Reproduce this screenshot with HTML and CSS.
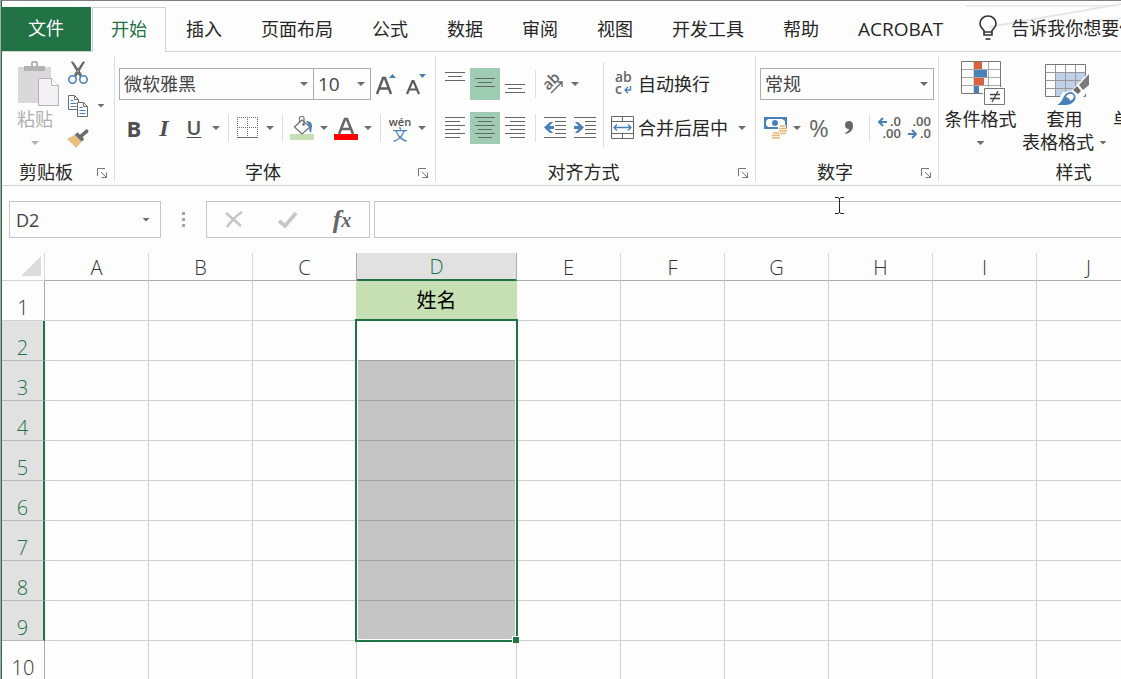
FILE: index.html
```html
<!DOCTYPE html>
<html lang="zh-CN">
<head>
  <meta charset="UTF-8">
  <meta name="viewport" content="width=device-width, initial-scale=1.0">
  <title>工作簿1 - Excel</title>
  <link rel="stylesheet" href="styles.css">
</head>
<body>
  <div class="window">
    <svg class="swoosh" width="160" height="32" viewBox="0 0 160 32">
      <path d="M5 5h150" stroke="#ececec" stroke-width="2"/>
      <path d="M28 26L160 3" stroke="#e6e6e6" stroke-width="2"/>
      <path d="M75 28L160 17" stroke="#eeeeee" stroke-width="2"/>
    </svg>

    <nav class="tabs">
      <button class="tab file">文件</button>
      <button class="tab active">开始</button>
      <button class="tab">插入</button>
      <button class="tab">页面布局</button>
      <button class="tab">公式</button>
      <button class="tab">数据</button>
      <button class="tab">审阅</button>
      <button class="tab">视图</button>
      <button class="tab">开发工具</button>
      <button class="tab">帮助</button>
      <button class="tab latin">ACROBAT</button>
      <button class="tell-me">
        <svg width="18" height="26" viewBox="0 0 18 26" fill="none" stroke="#333" stroke-width="1.600">
          <path d="M5 20V15.500C2.500 13 1 11.500 1 8.500A8 7.500 0 0 1 17 8.500C17 11.500 15.500 13 13 15.500V20zM5 17h8"/>
          <path d="M6.500 24h5"/>
        </svg>
        告诉我你想要做什么
      </button>
    </nav>

    <div class="ribbon">
      <!-- Clipboard -->
      <section class="group">
        <div class="group-body">
          <button class="big paste">
            <svg class="paste-icon" width="42" height="45" viewBox="0 0 42 45">
              <path d="M0 6h33v36H0z" fill="#dad8db"/>
              <path d="M6 10V5h7V2q0-2 2-2h3q2 0 2 2v3h7v5z" fill="#b3b3b3"/>
              <path d="M15 2h3v3h-3z" fill="#fff"/>
              <path d="M20.500 17.500h13l7 7v20h-20z" fill="#f3f1f4" stroke="#b3b3b3"/>
              <path d="M33.500 17.500v7h7" fill="#fff" stroke="#b3b3b3"/>
            </svg>
            <span>粘贴</span>
            <i class="caret light"></i>
          </button>
          <div class="clip-tools">
            <div class="row">
              <button class="tool" aria-label="剪切">
                <svg width="20" height="22" viewBox="0 0 20 22">
                  <path d="M3.500 0L12 14.500L13.500 12.500L5 0zM16.500 0L8 14.500L6.500 12.500L15 0z" fill="#6a6a6a" stroke="#6a6a6a"/>
                  <circle cx="4.500" cy="17.500" r="3.700" fill="#fff" stroke="#4a80b8" stroke-width="1.600"/>
                  <circle cx="15.500" cy="17.500" r="3.700" fill="#fff" stroke="#4a80b8" stroke-width="1.600"/>
                </svg>
              </button>
            </div>
            <div class="row">
              <button class="tool" aria-label="复制">
                <svg width="21" height="22" viewBox="0 0 21 22" fill="#fff" stroke="#6d6d6d">
                  <path d="M.5 .5h6l4 4v10H.5z"/><path d="M6.500 .5v4h4" fill="none"/>
                  <path d="M2.500 5.500h3M2.500 8.500h6M2.500 11.500h6" stroke="#4a80b8"/>
                  <path d="M9.500 7.500h6l4 4v10h-10z"/><path d="M15.500 7.500v4h4" fill="none"/>
                  <path d="M11.500 12.500h3M11.500 15.500h6M11.500 18.500h6" stroke="#4a80b8"/>
                </svg>
              </button>
              <button class="drop" aria-label="复制选项"><i class="caret"></i></button>
            </div>
            <div class="row">
              <button class="tool" aria-label="格式刷">
                <svg width="22" height="20" viewBox="0 0 24 22">
                  <path d="M0 11L9 6L16 14L10 21z" fill="#e8bf7c"/>
                  <path d="M10 5L17.500 12.500" stroke="#6d6d6d" stroke-width="4"/>
                  <path d="M15 8L21.500 2.500" stroke="#6d6d6d" stroke-width="4" stroke-linecap="round"/>
                </svg>
              </button>
            </div>
          </div>
        </div>
        <div class="group-foot">
          <span>剪贴板</span>
          <button class="launcher" aria-label="剪贴板设置">
            <svg width="11" height="11" viewBox="0 0 11 11" fill="none" stroke="#777"><path d="M.5 8V.5H8M4 4l5.500 5.500M9.500 4.500v5h-5"/></svg>
          </button>
        </div>
      </section>

      <!-- Font -->
      <section class="group">
        <div class="group-body pad stack">
          <div class="row">
            <label class="combo font-name"><select aria-label="字体"><option>微软雅黑</option></select></label>
            <label class="combo font-size"><select aria-label="字号"><option>10</option></select></label>
            <button class="tool" aria-label="增大字号">
              <svg width="22" height="22" viewBox="0 0 22 22">
                <path d="M2 21L8 5h2l6 16M4.500 15.500h9" fill="none" stroke="#5c5c5c" stroke-width="2.400"/>
                <path d="M14 5h7L17.500 1z" fill="#4a80b8"/>
              </svg>
            </button>
            <button class="tool" aria-label="减小字号">
              <svg width="22" height="22" viewBox="0 0 22 22">
                <path d="M2 21L7.500 8h1L14 21M4 16.500h8" fill="none" stroke="#5c5c5c" stroke-width="2.200"/>
                <path d="M14 1h7l-3.500 4z" fill="#4a80b8"/>
              </svg>
            </button>
          </div>
          <div class="row">
            <button class="tool bold">B</button>
            <button class="tool italic">I</button>
            <button class="tool underline">U</button>
            <button class="drop" aria-label="下划线选项"><i class="caret"></i></button>
            <span class="sep"></span>
            <button class="tool" aria-label="边框">
              <svg width="22" height="22" viewBox="0 0 22 22" stroke="#6d6d6d">
                <path d="M0 .5h22M0 10.500h22M.5 0v20M10.500 0v20M20.500 0v20" stroke-dasharray="1 1"/>
                <path d="M0 20.500h21"/>
              </svg>
            </button>
            <button class="drop" aria-label="边框选项"><i class="caret"></i></button>
            <span class="sep"></span>
            <button class="tool" aria-label="填充颜色">
              <svg width="24" height="24" viewBox="0 0 24 24">
                <path d="M0 18h24v6H0z" fill="#c6e0b4"/>
                <path d="M4.500 11L12 4l8 7-8 7z" fill="#fff" stroke="#6d6d6d" stroke-width="1.200"/>
                <path d="M9.500 7V2q0-1.500 1.500-1.500h1.500Q14 .5 14 2v6" fill="none" stroke="#6d6d6d" stroke-width="1.200"/>
                <circle cx="13.500" cy="8.500" r="1.300" fill="#6d6d6d"/>
                <path d="M16 5q6 0 6 5l-1 7q-3-3-1-6z" fill="#4a80b8"/>
              </svg>
            </button>
            <button class="drop" aria-label="填充颜色选项"><i class="caret"></i></button>
            <button class="tool" aria-label="字体颜色">
              <svg width="24" height="24" viewBox="0 0 24 24">
                <path d="M0 18h24v6H0z" fill="#f00"/>
                <path d="M5 18L11 3h2l6 15M7.500 13h9" fill="none" stroke="#666" stroke-width="2.600"/>
              </svg>
            </button>
            <button class="drop" aria-label="字体颜色选项"><i class="caret"></i></button>
            <span class="sep"></span>
            <button class="tool pinyin"><span>wén</span><b>文</b></button>
            <button class="drop" aria-label="拼音选项"><i class="caret"></i></button>
          </div>
        </div>
        <div class="group-foot">
          <span>字体</span>
          <button class="launcher" aria-label="字体设置">
            <svg width="11" height="11" viewBox="0 0 11 11" fill="none" stroke="#777"><path d="M.5 8V.5H8M4 4l5.500 5.500M9.500 4.500v5h-5"/></svg>
          </button>
        </div>
      </section>

      <!-- Alignment -->
      <section class="group">
        <div class="group-body">
          <div class="pad stack flush">
            <div class="row">
              <button class="tool" aria-label="顶端对齐">
                <svg width="20" height="24" viewBox="0 0 20 24" stroke="#666"><path d="M0 .5h20M3 4.500h14M0 8.500h20"/></svg>
              </button>
              <button class="tool on" aria-label="垂直居中">
                <svg width="20" height="24" viewBox="0 0 20 24" stroke="#666"><path d="M0 6.500h20M3 10.500h14M0 14.500h20"/></svg>
              </button>
              <button class="tool" aria-label="底端对齐">
                <svg width="20" height="24" viewBox="0 0 20 24" stroke="#666"><path d="M0 12.500h20M3 16.500h14M0 20.500h20"/></svg>
              </button>
              <span class="sep"></span>
              <button class="tool slim" aria-label="方向">
                <svg width="22" height="22" viewBox="0 0 22 22">
                  <text x="1" y="14" transform="rotate(-45 8 11)" class="glyph-ab">ab</text>
                  <path d="M8 20L19 9M14.500 9H19v5" fill="none" stroke="#666" stroke-width="1.400"/>
                </svg>
              </button>
              <button class="drop" aria-label="方向选项"><i class="caret"></i></button>
            </div>
            <div class="row">
              <button class="tool" aria-label="左对齐">
                <svg width="20" height="22" viewBox="0 0 20 22" stroke="#666"><path d="M0 .5h20M0 4.500h15M0 8.500h20M0 12.500h15M0 16.500h20M0 20.500h15"/></svg>
              </button>
              <button class="tool on" aria-label="居中">
                <svg width="20" height="22" viewBox="0 0 20 22" stroke="#666"><path d="M0 .5h20M3 4.500h14M0 8.500h20M3 12.500h14M0 16.500h20M3 20.500h14"/></svg>
              </button>
              <button class="tool" aria-label="右对齐">
                <svg width="20" height="22" viewBox="0 0 20 22" stroke="#666"><path d="M0 .5h20M5 4.500h15M0 8.500h20M5 12.500h15M0 16.500h20M5 20.500h15"/></svg>
              </button>
              <span class="sep"></span>
              <button class="tool" aria-label="减少缩进量">
                <svg width="22" height="22" viewBox="0 0 22 22">
                  <path d="M0 .5h22M11 4.500h11M11 8.500h11M11 12.500h11M11 16.500h11M0 20.500h22" stroke="#666"/>
                  <path d="M0 10.500L6 5h3L5.500 9H10v3H5.500L9 16H6z" fill="#4a80b8"/>
                </svg>
              </button>
              <button class="tool" aria-label="增加缩进量">
                <svg width="22" height="22" viewBox="0 0 22 22">
                  <path d="M0 .5h22M11 4.500h11M11 8.500h11M11 12.500h11M11 16.500h11M0 20.500h22" stroke="#666"/>
                  <path d="M10 10.500L4 5H1l3.500 4H0v3h4.500L1 16h3z" fill="#4a80b8"/>
                </svg>
              </button>
            </div>
          </div>
          <span class="divider"></span>
          <div class="stack merge">
            <button class="wide">
              <svg width="24" height="24" viewBox="0 0 24 24">
                <text x="4" y="10" class="glyph-wrap">ab</text>
                <text x="4" y="22" class="glyph-wrap">c</text>
                <path d="M19.500 14v4h-5M17 15l-3 3 3 3" fill="none" stroke="#4a80b8" stroke-width="1.400"/>
              </svg>
              自动换行
            </button>
            <div class="row">
              <button class="wide">
                <svg width="24" height="24" viewBox="0 0 24 24" fill="none" stroke="#666">
                  <path d="M.5 .5h22v22H.5zM.5 5.500h22M.5 17.500h22M11.500 .5v5M11.500 17.500v5"/>
                  <path d="M3 11.500h17M6 8.500l-3 3 3 3M17 8.500l3 3-3 3" stroke="#4a80b8" stroke-width="1.400"/>
                </svg>
                合并后居中
              </button>
              <button class="drop spaced" aria-label="合并选项"><i class="caret"></i></button>
            </div>
          </div>
        </div>
        <div class="group-foot">
          <span>对齐方式</span>
          <button class="launcher" aria-label="对齐设置">
            <svg width="11" height="11" viewBox="0 0 11 11" fill="none" stroke="#777"><path d="M.5 8V.5H8M4 4l5.500 5.500M9.500 4.500v5h-5"/></svg>
          </button>
        </div>
      </section>

      <!-- Number -->
      <section class="group">
        <div class="group-body pad stack">
          <label class="combo"><select aria-label="数字格式"><option>常规</option></select></label>
          <div class="row">
            <button class="tool" aria-label="会计数字格式">
              <svg width="24" height="24" viewBox="0 0 24 24">
                <path d="M1 1h23v12H1z" fill="#4a80b8"/>
                <path d="M5 3h14l3 2v4l-2 2H5L3 9V5z" fill="#fff"/>
                <circle cx="12" cy="7" r="3" fill="#4a80b8"/>
                <path d="M15 9h8v9h-8zM8 15h9v9H8z" fill="#fff"/>
                <path d="M17 10h5M16 12.500h8M16 15h8M17 17.500h6M10 17h6M9 19.500h8M9 22h8" stroke="#e2b66e" stroke-width="1.600"/>
              </svg>
            </button>
            <button class="drop" aria-label="货币选项"><i class="caret"></i></button>
            <button class="tool percent">%</button>
            <button class="tool" aria-label="千位分隔样式">
              <svg width="10" height="16" viewBox="0 0 10 16"><path d="M5 1q4 0 4 5 0 6-7 8l-1-1q4-2 4-4-4 0-4-4 0-4 4-4z" fill="#666"/></svg>
            </button>
            <span class="sep"></span>
            <button class="tool" aria-label="增加小数位数">
              <svg width="24" height="24" viewBox="0 0 24 24">
                <path d="M10 6H2M6 2L2 6l4 4" fill="none" stroke="#4a80b8" stroke-width="2"/>
                <text x="24" y="10" text-anchor="end" class="glyph-num">.0</text>
                <text x="24" y="22" text-anchor="end" class="glyph-num">.00</text>
              </svg>
            </button>
            <button class="tool" aria-label="减少小数位数">
              <svg width="24" height="24" viewBox="0 0 24 24">
                <path d="M1 18h8M5 14l4 4-4 4" fill="none" stroke="#4a80b8" stroke-width="2"/>
                <text x="24" y="10" text-anchor="end" class="glyph-num">.00</text>
                <text x="24" y="22" text-anchor="end" class="glyph-num">.0</text>
              </svg>
            </button>
          </div>
        </div>
        <div class="group-foot">
          <span>数字</span>
          <button class="launcher" aria-label="数字设置">
            <svg width="11" height="11" viewBox="0 0 11 11" fill="none" stroke="#777"><path d="M.5 8V.5H8M4 4l5.500 5.500M9.500 4.500v5h-5"/></svg>
          </button>
        </div>
      </section>

      <!-- Styles -->
      <section class="group styles">
        <div class="group-body">
          <button class="big cond">
            <svg class="cond-icon" width="45" height="45" viewBox="0 0 45 45">
              <path d="M.5 .5h39v32H.5z" fill="#fff" stroke="#777"/>
              <path d="M13 1v31M27.500 1v31M1 8.500h38M1 16.500h38M1 24.500h38" stroke="#aaa"/>
              <path d="M13 1h8v7h-8zM13 17h10v7H13z" fill="#d8623f"/>
              <path d="M13 9h13v7H13zM13 25h5v7h-5z" fill="#4a80b8"/>
              <path d="M22 26h23v19H22z" fill="#fff"/>
              <path d="M23.500 27.500h20v16h-20z" fill="#fff" stroke="#777"/>
              <path d="M29 33.500h10M29 37.500h10M37 30l-6 11" stroke="#444" stroke-width="1.300"/>
            </svg>
            <span>条件格式</span>
            <i class="caret"></i>
          </button>
          <button class="big">
            <svg class="table-icon" width="45" height="45" viewBox="0 0 45 45">
              <path d="M.5 3.500h40v32H.5z" fill="#fff" stroke="#777"/>
              <path d="M11 12h29v23H11z" fill="#bdd0e8"/>
              <path d="M10.500 4v31M20.500 4v31M30.500 4v31M1 11.500h39M1 19.500h39M1 27.500h39" stroke="#999"/>
              <path d="M45 10L26 30l-8 1L9 45h22l14-18z" fill="#fdfdfd"/>
              <path d="M44 13v11l-6 5-4-5z" fill="#7b7b7b"/>
              <path d="M32 25l4 5-3 3-5-4z" fill="#6d6d6d"/>
              <path d="M12 44q4-2 6-7 3-7 9-6 5 3 3 8-3 5-10 5z" fill="#4a80b8"/>
              <path d="M21 36q2-4 6-3 3 2 1 5l-3 2q0-3-4-4z" fill="#fff"/>
            </svg>
            <span>套用</span>
            <span class="with-caret">表格格式<i class="caret"></i></span>
          </button>
          <button class="big cell-styles"><svg width="45" height="45"></svg><span>单元格</span></button>
        </div>
        <div class="group-foot"><span>样式</span></div>
      </section>
    </div>

    <div class="formula-bar">
      <label class="combo name-box"><select aria-label="名称框"><option>D2</option></select></label>
      <svg class="grip" width="3" height="16" viewBox="0 0 3 16"><path d="M0 0h3v3H0zM0 6h3v3H0zM0 12h3v3H0z" fill="#a6a6a6"/></svg>
      <div class="entry">
        <button aria-label="取消">
          <svg width="18" height="17" viewBox="0 0 18 17"><path d="M1 2L16 15M17 1Q9 6 2 16" fill="none" stroke="#c6c6c6" stroke-width="2.600"/></svg>
        </button>
        <button aria-label="输入">
          <svg width="20" height="18" viewBox="0 0 20 18"><path d="M1 10l6 5L18 2" fill="none" stroke="#c6c6c6" stroke-width="3.600"/></svg>
        </button>
        <button class="fx">f<sub>x</sub></button>
      </div>
      <input class="formula" type="text" aria-label="编辑栏">
    </div>

    <table class="sheet">
      <colgroup>
        <col class="col-head"><col><col><col><col class="col-d"><col><col><col><col><col><col>
      </colgroup>
      <thead>
        <tr>
          <th class="corner"><svg width="20" height="20" viewBox="0 0 20 20"><path d="M20 0v20H0z" fill="#dcdcdc"/></svg></th>
          <th>A</th><th>B</th><th class="edge">C</th><th class="picked">D</th><th>E</th><th>F</th><th>G</th><th>H</th><th>I</th><th>J</th>
        </tr>
      </thead>
      <tbody>
        <tr><th>1</th><td></td><td></td><td class="beside-title"></td><td class="title">姓名</td><td></td><td></td><td></td><td></td><td></td><td></td></tr>
        <tr class="picked"><th>2</th><td></td><td></td><td></td><td class="first"><div class="selection"><span class="handle"></span></div></td><td></td><td></td><td></td><td></td><td></td><td></td></tr>
        <tr class="picked"><th>3</th><td></td><td></td><td></td><td class="shade"></td><td></td><td></td><td></td><td></td><td></td><td></td></tr>
        <tr class="picked"><th>4</th><td></td><td></td><td></td><td class="shade"></td><td></td><td></td><td></td><td></td><td></td><td></td></tr>
        <tr class="picked"><th>5</th><td></td><td></td><td></td><td class="shade"></td><td></td><td></td><td></td><td></td><td></td><td></td></tr>
        <tr class="picked"><th>6</th><td></td><td></td><td></td><td class="shade"></td><td></td><td></td><td></td><td></td><td></td><td></td></tr>
        <tr class="picked"><th>7</th><td></td><td></td><td></td><td class="shade"></td><td></td><td></td><td></td><td></td><td></td><td></td></tr>
        <tr class="picked"><th>8</th><td></td><td></td><td></td><td class="shade"></td><td></td><td></td><td></td><td></td><td></td><td></td></tr>
        <tr class="picked"><th>9</th><td></td><td></td><td></td><td class="shade"></td><td></td><td></td><td></td><td></td><td></td><td></td></tr>
        <tr><th>10</th><td></td><td></td><td></td><td></td><td></td><td></td><td></td><td></td><td></td><td></td></tr>
      </tbody>
    </table>

    <svg class="pointer" width="9" height="17" viewBox="0 0 9 17" fill="none" stroke="#222"><path d="M0 .5h3l1.500 1L6 .5h3M4.500 1v15M0 16.500h3l1.500-1 1.500 1h3"/></svg>
  </div>
</body>
</html>
```
FILE: styles.css
```css
* {
  margin: 0;
  padding: 0;
  box-sizing: border-box;
}

body {
  height: 100vh;
  overflow: hidden;
  background-color: #fdfdfd;
  font-family: "Open Sans", "Noto Sans CJK SC", sans-serif;
  font-size: 18px;
  line-height: 24px;
  color: #262626;
}

button,
select,
input {
  font: inherit;
  color: inherit;
  background: none;
  border: none;
  border-radius: 0;
  white-space: nowrap;
}

svg {
  display: block;
  flex: none;
  overflow: visible;
}

.window {
  position: relative;
  height: 100%;
  overflow: hidden;
  border-top: 1px solid #7f7f7f;
  border-left: 1px solid #a9a9a9;
  box-shadow: inset 1px 0 #217346;
  padding-left: 1px;
}

.swoosh {
  position: absolute;
  top: 0;
  right: 0;
}

/* Tabs */
.tabs {
  position: relative;
  display: flex;
  gap: 1px;
  padding-top: 6px;
  border-bottom: 1px solid #d2d2d2;
}

.tab {
  height: 44px;
  padding: 0 18px 2px;
  border: 1px solid transparent;
  border-bottom: none;
}

.tab.file {
  padding: 0 27px 2px 26px;
  background-color: #217346;
  color: #ffffff;
  border: none;
}

.tab.active {
  height: 45px;
  margin-bottom: -1px;
  padding-bottom: 3px;
  background-color: #fdfdfd;
  border-color: #d2d2d2;
  color: #217346;
}

.tab.latin {
  font-size: 19px;
}

.tell-me {
  display: flex;
  align-items: center;
  gap: 14px;
  padding: 0 0 2px 16px;
}

/* Ribbon */
.ribbon {
  display: flex;
  padding: 4px 0 3px;
  border-bottom: 1px solid #d2d2d2;
}

.group {
  flex: none;
  display: flex;
  flex-direction: column;
  border-right: 1px solid #dedede;
}

.group-body {
  display: flex;
  height: 104px;
}

.pad {
  padding-left: 4px;
  padding-right: 4px;
}

.pad.flush {
  padding-right: 0;
}

.stack {
  display: flex;
  flex-direction: column;
  gap: 12px;
  padding-top: 12px;
}

.row {
  display: flex;
  align-items: center;
  height: 32px;
}

.group-foot {
  display: flex;
  height: 22px;
}

.group-foot span {
  flex: 1;
  text-align: center;
}

.launcher {
  width: 24px;
  display: flex;
  align-items: center;
  justify-content: center;
  padding-top: 4px;
}

.tool {
  width: 30px;
  height: 32px;
  display: flex;
  align-items: center;
  justify-content: center;
  color: #505050;
}

.tool.slim {
  width: 28px;
}

.tool.on {
  background-color: #9fcdb3;
}

.drop {
  width: 14px;
  height: 32px;
  display: flex;
  align-items: center;
  justify-content: center;
}

.drop.spaced {
  margin: 0 6px 0 7px;
}

.caret {
  display: block;
  width: 8px;
  height: 4px;
  background-color: #6d6d6d;
  clip-path: polygon(0 0, 100% 0, 50% 100%);
}

.caret.light {
  background-color: #b3b3b3;
}

.sep {
  width: 1px;
  height: 28px;
  margin: 0 4px 0 5px;
  background-color: #dedede;
}

.divider {
  width: 1px;
  margin: 6px 7px 12px 3px;
  background-color: #dedede;
}

.combo {
  display: grid;
  align-items: center;
  height: 32px;
  border: 1px solid #ababab;
  color: #444444;
}

.combo select {
  grid-area: 1 / 1;
  appearance: none;
  width: 100%;
  height: 30px;
  padding-left: 4px;
}

.combo::after {
  content: '';
  grid-area: 1 / 1;
  justify-self: end;
  width: 8px;
  height: 4px;
  margin-right: 5px;
  background-color: #6d6d6d;
  clip-path: polygon(0 0, 100% 0, 50% 100%);
  pointer-events: none;
}

.font-name {
  width: 195px;
}

.font-size {
  width: 58px;
  margin-left: -1px;
  font-size: 19px;
}

.bold,
.underline {
  font-size: 22px;
  font-weight: 700;
}

.italic {
  font-family: "Liberation Serif", serif;
  font-size: 24px;
  font-weight: 700;
  font-style: italic;
}

.underline {
  font-size: 20px;
  font-weight: 600;
  text-decoration: underline;
  text-decoration-thickness: 1px;
  text-underline-offset: 2px;
}

.percent {
  font-size: 24px;
  color: #666666;
}

.pinyin {
  flex-direction: column;
  font-size: 11px;
  font-weight: 600;
  line-height: 12px;
}

.pinyin b {
  font-size: 15px;
  font-weight: 400;
  color: #4a80b8;
}

.glyph-ab {
  font-size: 15px;
  font-weight: 600;
  fill: #666666;
}

.glyph-wrap {
  font-size: 14px;
  font-weight: 600;
  fill: #666666;
}

.glyph-num {
  font-size: 13px;
  font-weight: 600;
  fill: #5c5c5c;
}

.wide {
  display: flex;
  align-items: center;
  gap: 3px;
  height: 32px;
}

.big {
  display: flex;
  flex-direction: column;
  align-items: center;
  padding-top: 5px;
  line-height: 23px;
}

.big svg {
  margin-bottom: 2px;
}

.big > .caret {
  margin-top: 10px;
}

.paste {
  width: 66px;
  color: #b0b0b0;
}

.paste-icon {
  margin-left: 8px;
}

.clip-tools {
  width: 46px;
}

.clip-tools .row {
  height: 33px;
}

.clip-tools .tool {
  width: 20px;
}

.clip-tools .drop {
  margin-left: 6px;
}

.styles {
  width: 270px;
}

.cond {
  width: 83px;
}

.cond-icon,
.table-icon {
  margin-left: 5px;
}

.with-caret {
  display: flex;
  align-items: center;
  gap: 5px;
}

.cell-styles {
  margin-left: 6px;
}

/* Formula bar */
.formula-bar {
  display: flex;
  align-items: center;
  padding: 15px 0 15px 7px;
}

.name-box {
  width: 152px;
  height: 37px;
  border-color: #c6c6c6;
}

.name-box select {
  height: 35px;
  padding-left: 6px;
}

.name-box::after {
  margin-right: 10px;
}

.grip {
  margin: 0 21px;
}

.entry {
  display: flex;
  height: 37px;
  border: 1px solid #c6c6c6;
}

.entry button {
  width: 54px;
  display: flex;
  align-items: center;
  justify-content: center;
}

.entry .fx {
  font-family: "Liberation Serif", serif;
  font-size: 26px;
  font-weight: 700;
  font-style: italic;
  color: #666666;
}

.fx sub {
  font-size: 20px;
}

.formula {
  flex: 1;
  min-width: 0;
  height: 37px;
  margin-left: 4px;
  padding: 0 8px;
  border: 1px solid #c6c6c6;
  border-right: none;
}

/* Sheet */
.sheet {
  width: 1139px;
  min-width: 100%;
  table-layout: fixed;
  border-collapse: separate;
  border-spacing: 0;
  font-size: 20px;
}

.col-head {
  width: 43px;
}

.col-d {
  width: 160px;
}

.sheet th {
  font-weight: 300;
  color: #333333;
}

.sheet thead th {
  height: 28px;
  line-height: 24px;
  padding-top: 2px;
  border-right: 1px solid #dadada;
  border-bottom: 1px solid #ababab;
}

.sheet thead .corner {
  padding: 0 3px 2px 0;
  border-bottom-color: #d4d4d4;
}

.corner svg {
  margin-left: auto;
}

.sheet thead .edge {
  border-right-color: #ababab;
}

.sheet thead .picked {
  background-color: #e1e1e1;
  color: #217346;
  border-right-color: #ababab;
  border-bottom: 2px solid #217346;
}

.sheet tbody th,
.sheet td {
  height: 40px;
  border-right: 1px solid #d0d0d0;
  border-bottom: 1px solid #d0d0d0;
}

.sheet tbody th {
  line-height: 24px;
  vertical-align: bottom;
  border-right-color: #ababab;
}

.sheet .picked th {
  background-color: #e1e1e1;
  color: #217346;
  border-right: 2px solid #217346;
  border-bottom-color: #b8b8b8;
}

.sheet .beside-title {
  border-right-color: #c6e0b4;
}

.sheet .title {
  background-color: #c6e0b4;
  border-right-color: #c6e0b4;
  text-align: center;
  color: #000000;
}

.sheet .first {
  position: relative;
  border-bottom-color: #a2a2a2;
}

.sheet .shade {
  background-color: #c5c5c5;
  border-bottom-color: #a2a2a2;
}

/* Outline over D2:D9 */
.selection {
  position: absolute;
  top: -2px;
  left: -2px;
  z-index: 1;
  width: 163px;
  height: 323px;
  border: 2px solid #217346;
  box-shadow: inset 0 0 0 1px #ffffff;
}

.handle {
  position: absolute;
  right: -3px;
  bottom: -3px;
  width: 7px;
  height: 7px;
  background-color: #217346;
  border-top: 1px solid #ffffff;
  border-left: 1px solid #ffffff;
}

.pointer {
  position: absolute;
  top: 196px;
  left: 834px;
}
```
